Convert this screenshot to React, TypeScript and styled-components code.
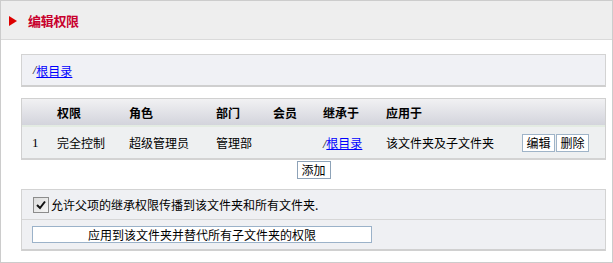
import React, { FC } from 'react';
import styled, { createGlobalStyle } from 'styled-components';

const GlobalStyle = createGlobalStyle`
  html, body {
    margin: 0;
    padding: 0;
    background: #ffffff;
  }
  body {
    font-family: "Liberation Serif", "Noto Sans CJK SC", serif;
    font-size: 12px;
    color: #000;
  }
`;

const Panel = styled.div`
  box-sizing: border-box;
  width: 613px;
  height: 263px;
  border: 1px solid #cccccc;
  background: #ffffff;
`;

const TitleBar = styled.div`
  height: 38px;
  background: #eeeeee;
  border-bottom: 1px solid #dadada;
  display: flex;
  align-items: center;
  padding-left: 8px;
  gap: 11px;
`;

const Arrow = styled.span`
  width: 0;
  height: 0;
  border-top: 5.5px solid transparent;
  border-bottom: 5.5px solid transparent;
  border-left: 8px solid #dd0000;
  margin-top: 1px;
`;

const Title = styled.h1`
  margin: 0;
  font-family: "Noto Sans CJK SC", sans-serif;
  font-size: 13px;
  font-weight: bold;
  color: #c8002d;
  letter-spacing: -0.3px;
`;

const Content = styled.div`
  padding: 14px 6px 0 20px;
  display: flex;
  flex-direction: column;
`;

const PathBox = styled.div`
  box-sizing: border-box;
  height: 33px;
  background: #f0f1f5;
  border: 1px solid #d3d3d3;
  border-bottom: 2px solid #cfcfcf;
  display: flex;
  align-items: center;
  padding-left: 11px;
`;

const Slash = styled.span`
  font-family: "Liberation Serif", serif;
  font-style: italic;
`;

const Link = styled.a`
  color: #0000ff;
  text-decoration: underline;
  font-family: "Noto Sans CJK SC", sans-serif;
  cursor: pointer;
`;

const Table = styled.div`
  margin-top: 11px;
  border: 1px solid #d0d0d0;
  border-bottom: 2px solid #d3d3d3;
  display: flex;
  flex-direction: column;
`;

const Row = styled.div<{ $head?: boolean }>`
  display: grid;
  grid-template-columns: 25px 72px 87px 57px 50px 63px 136px 1fr;
  align-items: center;
  padding-left: 10px;
  height: ${(p) => (p.$head ? '26px' : '31px')};
  background: ${(p) =>
    p.$head ? 'linear-gradient(#f1f1f3, #d3d4dc)' : '#eef0f1'};
  border-top: ${(p) => (p.$head ? 'none' : '2px solid #e3ebe2')};
  font-family: "Noto Sans CJK SC", sans-serif;
  font-weight: ${(p) => (p.$head ? 'bold' : 'normal')};
`;

const Index = styled.span`
  font-family: "Liberation Serif", serif;
  font-size: 13px;
`;

const Cell = styled.span`
  white-space: nowrap;
`;

const Actions = styled.div`
  display: flex;
  gap: 1px;
  padding-top: 1px;
`;

const SmallButton = styled.button`
  box-sizing: border-box;
  height: 18px;
  width: 33px;
  padding: 0;
  background: #ffffff;
  border: 1px solid #9fb4c8;
  font-family: "Noto Sans CJK SC", sans-serif;
  font-size: 12px;
  line-height: 16px;
  color: #000;
`;

const AddWrap = styled.div`
  display: flex;
  justify-content: center;
  padding-top: 1px;
`;

const AddButton = styled(SmallButton)`
  width: 34px;
  border-color: #8ea3b8;
`;

const OptionBox = styled.div`
  margin-top: 10px;
  background: #eff0f3;
  border: 1px solid #d3d3d3;
  border-bottom: 2px solid #d0d0d0;
  display: flex;
  flex-direction: column;
`;

const OptionRow = styled.div<{ $last?: boolean }>`
  height: 29px;
  display: flex;
  align-items: center;
  padding-left: 11px;
  border-bottom: ${(p) => (p.$last ? 'none' : '1px solid #d6d6d6')};
  font-family: "Noto Sans CJK SC", sans-serif;
`;

const CheckBox = styled.span`
  box-sizing: border-box;
  width: 16px;
  height: 16px;
  border: 1px solid #8c8c8c;
  background: linear-gradient(135deg, #dcdcdc, #f6f6f6);
  display: flex;
  align-items: center;
  justify-content: center;
  margin-right: 2px;
`;

const WideButton = styled.button`
  box-sizing: border-box;
  width: 340px;
  height: 17px;
  margin-left: -1px;
  padding: 0;
  background: #ffffff;
  border: 1px solid #9bb2c9;
  font-family: "Noto Sans CJK SC", sans-serif;
  font-size: 12px;
  line-height: 15px;
  color: #000;
  text-align: center;
`;

const rows = [
  {
    index: 1,
    right: '完全控制',
    role: '超级管理员',
    dept: '管理部',
    member: '',
    apply: '该文件夹及子文件夹',
  },
];

const App: FC = () => {
  return (
    <Panel>
      <GlobalStyle />
      <TitleBar>
        <Arrow />
        <Title>编辑权限</Title>
      </TitleBar>
      <Content>
        <PathBox>
          <Slash>/</Slash>
          <Link>根目录</Link>
        </PathBox>

        <Table>
          <Row $head>
            <Cell />
            <Cell>权限</Cell>
            <Cell>角色</Cell>
            <Cell>部门</Cell>
            <Cell>会员</Cell>
            <Cell>继承于</Cell>
            <Cell>应用于</Cell>
            <Cell />
          </Row>
          {rows.map((r) => (
            <Row key={r.index}>
              <Index>{r.index}</Index>
              <Cell>{r.right}</Cell>
              <Cell>{r.role}</Cell>
              <Cell>{r.dept}</Cell>
              <Cell>{r.member}</Cell>
              <Cell>
                <Slash>/</Slash>
                <Link>根目录</Link>
              </Cell>
              <Cell>{r.apply}</Cell>
              <Actions>
                <SmallButton>编辑</SmallButton>
                <SmallButton>删除</SmallButton>
              </Actions>
            </Row>
          ))}
        </Table>
        <AddWrap>
          <AddButton>添加</AddButton>
        </AddWrap>

        <OptionBox>
          <OptionRow>
            <CheckBox>
              <svg width="10" height="10" viewBox="0 0 10 10">
                <path d="M1 5 L4 8 L9 1.5" fill="none" stroke="#111" strokeWidth="2" />
              </svg>
            </CheckBox>
            允许父项的继承权限传播到该文件夹和所有文件夹.
          </OptionRow>
          <OptionRow $last>
            <WideButton>应用到该文件夹并替代所有子文件夹的权限</WideButton>
          </OptionRow>
        </OptionBox>
      </Content>
    </Panel>
  );
};

export default App;
